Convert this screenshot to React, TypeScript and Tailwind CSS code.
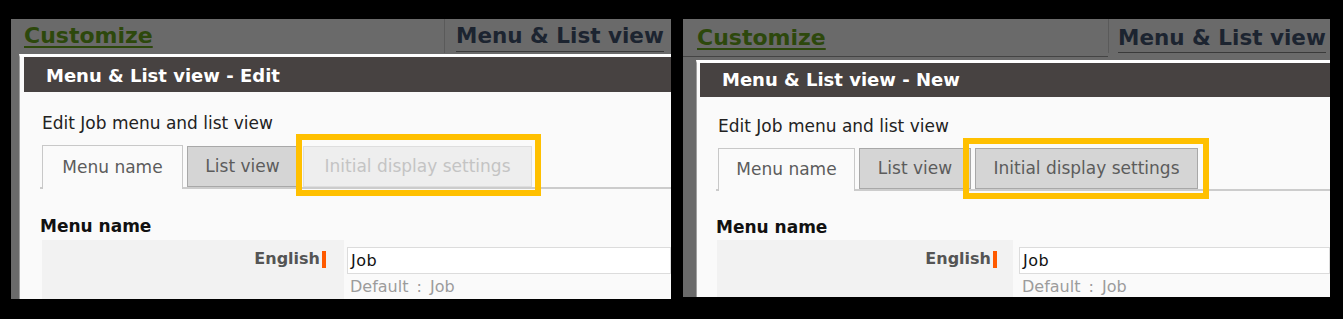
import React from "react";

type PanelProps = {
  wrap: string;
  topBar: string;
  leftPart: string;
  rightPart: string;
  inner: string;
  header: string;
  title: string;
  content: string;
  introText: string;
  tabRow: string;
  tabs: { label: string; cls: string }[];
  heading: string;
  row: string;
  labelCell: string;
  inputCol: string;
  highlight: string;
};

function Panel(p: PanelProps) {
  return (
    <div className={p.wrap}>
      <div className={p.topBar}>
        <div className={p.leftPart}>
          <span className="text-[22px] font-bold leading-[30px] text-[#2d480c] underline decoration-[2px] underline-offset-[3px]">
            Customize
          </span>
        </div>
        <div className="w-px h-[34px] bg-[#5a5a5a]" />
        <div className={p.rightPart}>
          <span className="text-[21.5px] font-bold leading-[28px] text-[#1c2430]">Menu &amp; List view</span>
        </div>
      </div>
      <div className={p.inner}>
        <div className={p.header}>
          <span className="text-[18px] font-bold leading-none text-white">{p.title}</span>
        </div>
        <div className={p.content}>
          <div className={p.introText}>Edit Job menu and list view</div>
          <div className={p.tabRow}>
            {p.tabs.map((t) => (
              <div key={t.label} className={t.cls}>
                {t.label}
              </div>
            ))}
          </div>
          <div className={p.heading}>Menu name</div>
          <div className={p.row}>
            <div className={p.labelCell}>
              <span className="text-[16px] font-bold leading-[24px] text-[#555555]">English</span>
              <span className="ml-[2px] mt-[4px] h-[17px] w-[4px] bg-[#ff5a00]" />
            </div>
            <div className={p.inputCol}>
              <div className="h-[27px] border border-[#dcdcdc] bg-white pl-[3px] text-[16px] leading-[25px] text-[#111111] [letter-spacing:0.5px]">
                Job
              </div>
              <div className="mt-[3px] pl-[3px] text-[16px] leading-[20px] text-[#9c9c9c] [word-spacing:3px]">
                Default : Job
              </div>
            </div>
          </div>
        </div>
      </div>
      <div className={p.highlight} />
    </div>
  );
}

const activeTab =
  "-mb-[2px] flex items-center justify-center border border-b-0 border-[#c8c8c8] bg-[#fafafa] text-[17px] text-[#5c5c5c]";
const inactiveTab =
  "flex h-[41px] items-center justify-center border border-[#a8a8a8] bg-[#d5d5d5] text-[17px] text-[#5c5c5c]";
const disabledTab =
  "flex h-[41px] items-center justify-center border border-[#dedede] bg-[#eeeeee] text-[17px] text-[#c4c4c4]";

export default function App() {
  return (
    <div className="flex h-[319px] w-[1343px] items-start bg-black pt-[19px] font-['DejaVu_Sans',sans-serif]">
      <Panel
        wrap="relative ml-[11px] h-[280px] w-[660px] shrink-0 overflow-hidden bg-[#6a6a6a]"
        topBar="flex h-[35px]"
        leftPart="w-[433px] shrink-0 pl-[13px] pt-[2px]"
        rightPart="h-[33px] shrink-0 border-b border-[#3a3a3a] ml-[11px] pt-[3px] whitespace-nowrap"
        inner="ml-[8px] border-l border-t-[3px] border-l-[#a0a0a0] border-t-white bg-[#fafafa] h-[245px]"
        header="ml-[4px] h-[35px] bg-[#474241] pl-[22px] pt-[8px]"
        title="Menu & List view - Edit"
        content="pl-[20px]"
        introText="pl-[2px] pt-[19px] text-[17px] leading-[24px] text-[#222222]"
        tabRow="mt-[10px] flex h-[44px] items-end border-b-2 border-[#cccccc]"
        tabs={[
          { label: "Menu name", cls: "ml-[2px] h-[44px] w-[141px] " + activeTab },
          { label: "List view", cls: "ml-[4px] w-[111px] " + inactiveTab },
          { label: "Initial display settings", cls: "ml-[5px] w-[229px] " + disabledTab },
        ]}
        heading="mt-[25px] text-[17px] font-bold leading-[24px] text-[#111111]"
        row="mt-[2px] flex h-[60px]"
        labelCell="ml-[2px] flex w-[302px] shrink-0 items-start justify-end bg-[#f2f2f2] pr-[18px] pt-[7px]"
        inputCol="ml-[3px] flex-1 pt-[7px]"
        highlight="absolute left-[285px] top-[115px] h-[62px] w-[245px] border-[6px] border-[#ffc000]"
      />
      <Panel
        wrap="relative ml-[12px] h-[278px] w-[647px] shrink-0 overflow-hidden bg-[#6a6a6a]"
        topBar="flex h-[41px]"
        leftPart="h-[38px] w-[425px] shrink-0 border-b border-[#444444] pl-[14px] pt-[4px]"
        rightPart="h-[34px] shrink-0 border-b border-[#3a3a3a] ml-[9px] pt-[5px] whitespace-nowrap"
        inner="ml-[13px] border-l border-t-[3px] border-l-[#a0a0a0] border-t-white bg-[#fafafa] h-[237px]"
        header="ml-[3px] h-[34px] bg-[#474241] pl-[22px] pt-[6px]"
        title="Menu & List view - New"
        content="pl-[19px]"
        introText="pl-[2px] pt-[17px] text-[17px] leading-[24px] text-[#222222]"
        tabRow="mt-[10px] flex h-[43px] items-end border-b-2 border-[#cccccc]"
        tabs={[
          { label: "Menu name", cls: "ml-[2px] h-[43px] w-[137px] " + activeTab },
          { label: "List view", cls: "ml-[4px] w-[112px] " + inactiveTab },
          { label: "Initial display settings", cls: "ml-[4px] w-[223px] " + inactiveTab },
        ]}
        heading="mt-[24px] text-[17px] font-bold leading-[24px] text-[#111111]"
        row="mt-[1px] flex h-[60px]"
        labelCell="ml-[1px] flex w-[296px] shrink-0 items-start justify-end bg-[#f2f2f2] pr-[16px] pt-[7px]"
        inputCol="ml-[6px] flex-1 pt-[7px]"
        highlight="absolute left-[280px] top-[119px] h-[61px] w-[246px] border-[6px] border-[#ffc000]"
      />
    </div>
  );
}
